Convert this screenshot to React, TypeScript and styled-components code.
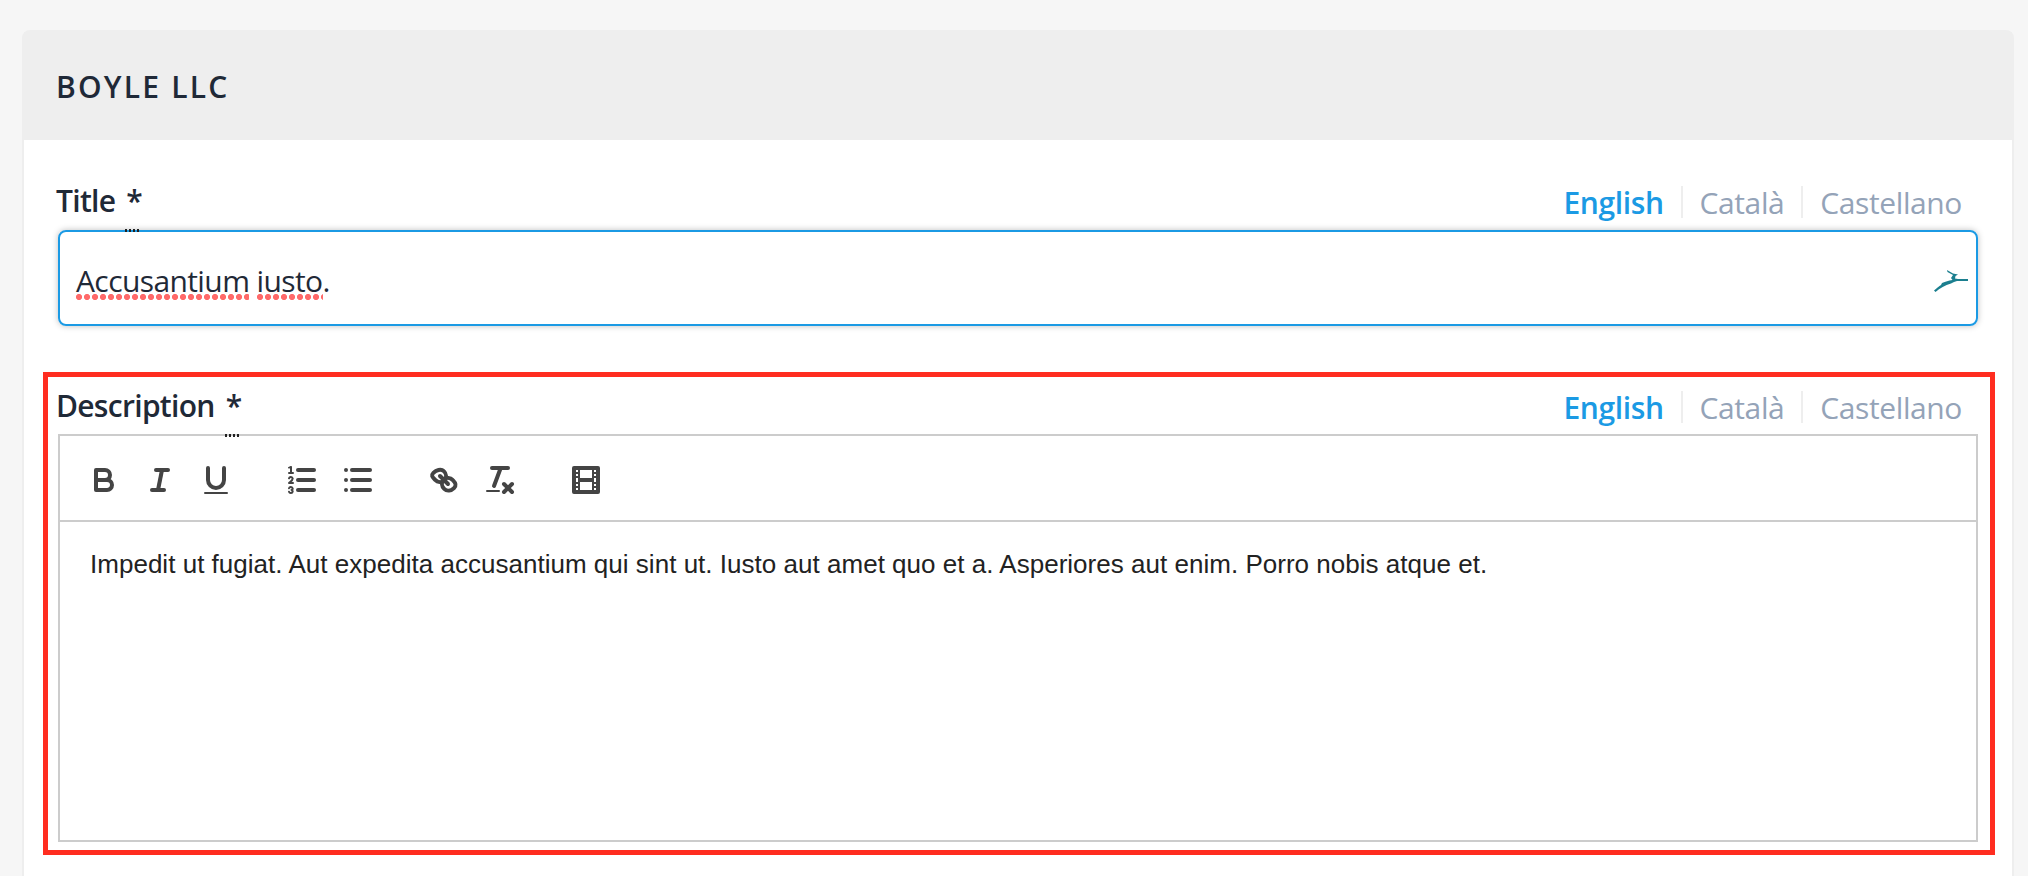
import React from 'react';
import styled, { createGlobalStyle } from 'styled-components';

const GlobalStyle = createGlobalStyle`
  html, body {
    margin: 0;
    padding: 0;
    height: 876px;
    overflow: hidden;
    background: #f6f6f6;
    font-family: "Open Sans", "Liberation Sans", sans-serif;
    color: #1f2937;
  }
`;

const Page = styled.div`
  height: 876px;
  box-sizing: border-box;
  padding: 30px 14px 0 22px;
  overflow: hidden;
`;

const Card = styled.section`
  background: #fff;
  border: 2px solid #eee;
  border-radius: 8px 8px 0 0;
  min-height: 900px;
`;

const CardHeader = styled.header`
  height: 108px;
  background: #eee;
  display: flex;
  align-items: center;
  padding: 0 32px;
`;

const CardTitle = styled.h2`
  margin: 0;
  font-size: 30px;
  font-weight: 600;
  letter-spacing: 2.2px;
  color: #1f2937;
`;

const CardBody = styled.div`
  padding: 46px 34px 0;
`;

const LabelRow = styled.div<{ $gap: number }>`
  display: flex;
  justify-content: space-between;
  align-items: flex-start;
  height: 32px;
  margin-bottom: ${p => p.$gap}px;
`;

const Label = styled.label`
  margin: -1px 0 0 -2px;
  font-size: 30px;
  line-height: 32px;
  font-weight: 600;
  letter-spacing: -0.7px;
  color: #1f2937;
`;

const Required = styled.abbr`
  position: relative;
  margin-left: 11px;

  &::after {
    content: '';
    position: absolute;
    left: -1px;
    bottom: -11px;
    width: 14px;
    height: 3px;
    background: repeating-linear-gradient(90deg, #222 0 2px, transparent 2px 4px);
  }
`;

const Tabs = styled.div`
  display: flex;
  padding-right: 16px;
`;

const Tab = styled.a<{ $active?: boolean }>`
  height: 32px;
  font-size: 30px;
  line-height: 34px;
  letter-spacing: -0.4px;
  padding: 0 17px;
  color: ${p => (p.$active ? '#1b9ae4' : '#94a3b8')};
  font-weight: ${p => (p.$active ? 600 : 400)};

  & + & {
    border-left: 2px solid #eee;
  }

  &:last-child {
    padding-right: 0;
  }
`;

const InputBox = styled.div`
  height: 96px;
  box-sizing: border-box;
  border: 2px solid #1b9ae4;
  border-radius: 8px;
  box-shadow: 0 0 6px rgba(0, 0, 0, 0.25);
  display: flex;
  align-items: center;
  justify-content: space-between;
  padding: 4px 8px 0 16px;
  font-size: 30px;
  letter-spacing: -0.6px;
  color: #1f2937;
`;

const InputIcon = styled.svg`
  margin-top: 2px;
`;

const Misspelled = styled.span`
  background: radial-gradient(circle at 3px 3px, #ff6a6a 2.8px, transparent 3.2px) left 0 bottom 1px / 8px 6px repeat-x;
`;

const RedFrame = styled.div`
  margin: 46px -17px 0 -15px;
  border: 5px solid #ff2d20;
  padding: 14px 12px 8px 10px;
`;

const Editor = styled.div`
  border: 2px solid #ccc;
  height: 408px;
  box-sizing: border-box;
  display: flex;
  flex-direction: column;
`;

const Toolbar = styled.div`
  height: 86px;
  box-sizing: border-box;
  border-bottom: 2px solid #ccc;
  padding: 20px 16px 16px;
  display: flex;
  gap: 30px;
`;

const ToolGroup = styled.div`
  display: flex;
`;

const ToolButton = styled.button`
  width: 56px;
  height: 48px;
  padding: 6px 10px;
  border: 0;
  background: none;

  svg {
    display: block;
    width: 36px;
    height: 36px;
    fill: none;
    stroke: #444;
    stroke-width: 2;
    stroke-linecap: round;
    stroke-linejoin: round;
  }
  svg .thin {
    stroke-width: 1;
  }
  svg .fill {
    fill: #444;
    stroke: none;
  }
`;

const EditorContent = styled.div`
  flex: 1;
  padding: 24px 30px;
  font-family: "Liberation Sans", Arial, sans-serif;
  font-size: 26px;
  line-height: 37px;
  letter-spacing: 0.02px;
  color: #222;
`;

const languages = ['English', 'Català', 'Castellano'];

const LanguageTabs = () => (
  <Tabs>
    {languages.map((lang, i) => (
      <Tab key={lang} $active={i === 0}>
        {lang}
      </Tab>
    ))}
  </Tabs>
);

const DeerIcon = () => (
  <InputIcon width="34" height="22" viewBox="0 0 34 22">
    <path
      d="M0 20.5 L1.5 22 C6 18 11 15.5 17 13.5 C19 12.5 21 11.5 23 11 L34 11 L34 9 L24 9 L21 8.5 L21.5 6 L24 4.5 L19 3.5 L13 0 L13.5 2 L19 5 L17 8 L18.5 10 C14 10.5 12 11.5 8 13 L7 15 C5 16 3 18 0 20.5 Z"
      fill="#1b7f8f"
    />
  </InputIcon>
);

const App: React.FC = () => {
  return (
    <Page>
      <GlobalStyle />
      <Card>
        <CardHeader>
          <CardTitle>BOYLE LLC</CardTitle>
        </CardHeader>
        <CardBody>
          <LabelRow $gap={12}>
            <Label>
              Title<Required>*</Required>
            </Label>
            <LanguageTabs />
          </LabelRow>
          <InputBox>
            <span>
              <Misspelled>Accusantium</Misspelled> <Misspelled>iusto</Misspelled>.
            </span>
            <DeerIcon />
          </InputBox>

          <RedFrame>
            <LabelRow $gap={11}>
              <Label>
                Description<Required>*</Required>
              </Label>
              <LanguageTabs />
            </LabelRow>
            <Editor>
              <Toolbar>
                <ToolGroup>
                  <ToolButton>
                    <svg viewBox="0 0 18 18">
                      <path d="M5,4H9.5A2.5,2.5,0,0,1,12,6.5v0A2.5,2.5,0,0,1,9.5,9H5A0,0,0,0,1,5,9V4A0,0,0,0,1,5,4Z" />
                      <path d="M5,9h5.5A2.5,2.5,0,0,1,13,11.5v0A2.5,2.5,0,0,1,10.5,14H5a0,0,0,0,1,0,0V9A0,0,0,0,1,5,9Z" />
                    </svg>
                  </ToolButton>
                  <ToolButton>
                    <svg viewBox="0 0 18 18">
                      <line x1="7" x2="13" y1="4" y2="4" />
                      <line x1="5" x2="11" y1="14" y2="14" />
                      <line x1="8" x2="10" y1="14" y2="4" />
                    </svg>
                  </ToolButton>
                  <ToolButton>
                    <svg viewBox="0 0 18 18">
                      <path d="M5,3V9a4.012,4.012,0,0,0,4,4H9a4.012,4.012,0,0,0,4-4V3" />
                      <rect className="fill" height="1" rx=".5" ry=".5" width="12" x="3" y="15" />
                    </svg>
                  </ToolButton>
                </ToolGroup>
                <ToolGroup>
                  <ToolButton>
                    <svg viewBox="0 0 18 18">
                      <line x1="7" x2="15" y1="4" y2="4" />
                      <line x1="7" x2="15" y1="9" y2="9" />
                      <line x1="7" x2="15" y1="14" y2="14" />
                      <line className="thin" x1="2.5" x2="4.5" y1="5.5" y2="5.5" />
                      <path
                        className="fill"
                        d="M3.5,6A0.5,0.5,0,0,1,3,5.5V3.085l-0.276.138A0.5,0.5,0,0,1,2.053,3c-0.124-.247-0.023-0.324.224-0.447l1-.5A0.5,0.5,0,0,1,4,2.5v3A0.5,0.5,0,0,1,3.5,6Z"
                      />
                      <path className="thin" d="M4.5,10.5h-2c0-.234,1.85-1.076,1.85-2.234A0.959,0.959,0,0,0,2.5,8.156" />
                      <path
                        className="thin"
                        d="M2.5,14.846a0.959,0.959,0,0,0,1.85-.109A0.7,0.7,0,0,0,3.75,14a0.688,0.688,0,0,0,.6-0.736,0.959,0.959,0,0,0-1.85-.109"
                      />
                    </svg>
                  </ToolButton>
                  <ToolButton>
                    <svg viewBox="0 0 18 18">
                      <line x1="6" x2="15" y1="4" y2="4" />
                      <line x1="6" x2="15" y1="9" y2="9" />
                      <line x1="6" x2="15" y1="14" y2="14" />
                      <line x1="3" x2="3" y1="4" y2="4" />
                      <line x1="3" x2="3" y1="9" y2="9" />
                      <line x1="3" x2="3" y1="14" y2="14" />
                    </svg>
                  </ToolButton>
                </ToolGroup>
                <ToolGroup>
                  <ToolButton>
                    <svg viewBox="0 0 18 18">
                      <line x1="7" x2="11" y1="7" y2="11" />
                      <path d="M8.9,4.577a3.476,3.476,0,0,1,.36,4.679A3.476,3.476,0,0,1,4.577,8.9C3.185,7.5,2.35,6.776,3.7,5.423,5.053,4.057,7.5,3.185,8.9,4.577Z" />
                      <path d="M13.423,9.1a3.476,3.476,0,0,0-4.679-.36,3.476,3.476,0,0,0,.36,4.679c1.392,1.392,3.5,1.033,4.9-.36S14.815,10.5,13.423,9.1Z" />
                    </svg>
                  </ToolButton>
                  <ToolButton>
                    <svg viewBox="0 0 18 18">
                      <line x1="5" x2="13" y1="3" y2="3" />
                      <line x1="6" x2="9.35" y1="12" y2="3" />
                      <line x1="11" x2="15" y1="11" y2="15" />
                      <line x1="15" x2="11" y1="11" y2="15" />
                      <rect className="fill" height="1" rx=".5" ry=".5" width="7" x="2" y="14" />
                    </svg>
                  </ToolButton>
                </ToolGroup>
                <ToolGroup>
                  <ToolButton>
                    <svg viewBox="0 0 18 18">
                      <rect height="12" width="12" x="3" y="3" />
                      <rect className="fill" height="12" width="1" x="5" y="3" />
                      <rect className="fill" height="12" width="1" x="12" y="3" />
                      <rect className="fill" height="2" width="8" x="5" y="8" />
                      <rect className="fill" height="1" width="3" x="3" y="5" />
                      <rect className="fill" height="1" width="3" x="3" y="7" />
                      <rect className="fill" height="1" width="3" x="3" y="10" />
                      <rect className="fill" height="1" width="3" x="3" y="12" />
                      <rect className="fill" height="1" width="3" x="12" y="5" />
                      <rect className="fill" height="1" width="3" x="12" y="7" />
                      <rect className="fill" height="1" width="3" x="12" y="10" />
                      <rect className="fill" height="1" width="3" x="12" y="12" />
                    </svg>
                  </ToolButton>
                </ToolGroup>
              </Toolbar>
              <EditorContent>
                Impedit ut fugiat. Aut expedita accusantium qui sint ut. Iusto aut amet quo et a. Asperiores aut enim. Porro nobis atque et.
              </EditorContent>
            </Editor>
          </RedFrame>
        </CardBody>
      </Card>
    </Page>
  );
};

export default App;
